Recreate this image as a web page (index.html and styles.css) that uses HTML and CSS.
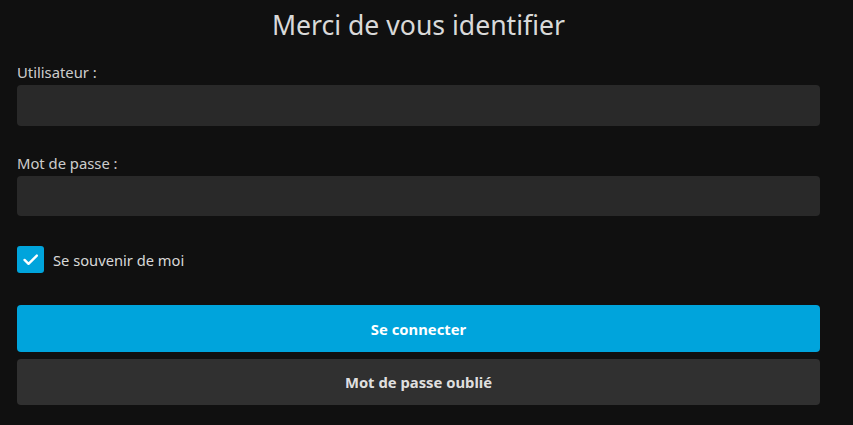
FILE: index.html
```html
<!DOCTYPE html>
<html lang="fr">
<head>
<meta charset="utf-8">
<link rel="stylesheet" href="styles.css">
</head>
<body>
<form class="login">
  <h1 class="title">Merci de vous identifier</h1>
  <div class="field">
    <label class="label" for="user">Utilisateur :</label>
    <input class="input" id="user" type="text">
  </div>
  <div class="field field-pass">
    <label class="label" for="pass">Mot de passe :</label>
    <input class="input" id="pass" type="password">
  </div>
  <label class="check">
    <span class="box">
      <svg width="19" height="19" viewBox="0 0 24 24"><path d="M4.5 12.5l5 5L20 7" fill="none" stroke="#fff" stroke-width="3" stroke-linecap="round" stroke-linejoin="round"/></svg>
    </span>
    <span class="check-text">Se souvenir de moi</span>
  </label>
  <button type="button" class="btn btn-primary">Se connecter</button>
  <button type="button" class="btn btn-secondary">Mot de passe oublié</button>
</form>
</body>
</html>
```
FILE: styles.css
```css
html, body {
  margin: 0;
  padding: 0;
  background: #101010;
  height: 100%;
}
body {
  font-family: "Noto Sans", sans-serif;
  color: rgba(255,255,255,0.8);
}
.login {
  width: 803px;
  margin-left: 17px;
  display: flex;
  flex-direction: column;
}
.title {
  margin: 0;
  padding-top: 5px;
  height: 47px;
  font-size: 26.6px;
  font-weight: 400;
  line-height: 40px;
  text-align: center;
  color: rgba(255,255,255,0.85);
}
.field {
  display: flex;
  flex-direction: column;
}
.label {
  font-size: 14.8px;
  line-height: 20px;
  height: 20px;
  margin-top: 10px;
  margin-bottom: 3px;
}
.field-pass .label {
  margin-top: 27px;
  margin-bottom: 3px;
}
.input {
  box-sizing: border-box;
  height: 41px;
  border: 0;
  border-radius: 4px;
  background: #292929;
  color: #fff;
  outline: none;
  font: inherit;
}
.field-pass .input { height: 40px; }
.check {
  display: flex;
  align-items: center;
  gap: 9px;
  margin-top: 30px;
  height: 27px;
}
.box {
  width: 27px;
  height: 27px;
  border-radius: 3px;
  background: #00a4dc;
  display: flex;
  align-items: center;
  justify-content: center;
}
.check-text {
  font-size: 14.7px;
  color: rgba(255,255,255,0.85);
}
.btn {
  border: 0;
  border-radius: 4px;
  font-family: "Noto Sans", sans-serif;
  font-weight: 700;
  font-size: 14.8px;
  width: 100%;
}
.btn-primary {
  margin-top: 32px;
  height: 47px;
  background: #00a4dc;
  color: #fff;
}
.btn-secondary {
  margin-top: 7px;
  height: 46px;
  background: #303030;
  color: rgba(255,255,255,0.87);
}
```
